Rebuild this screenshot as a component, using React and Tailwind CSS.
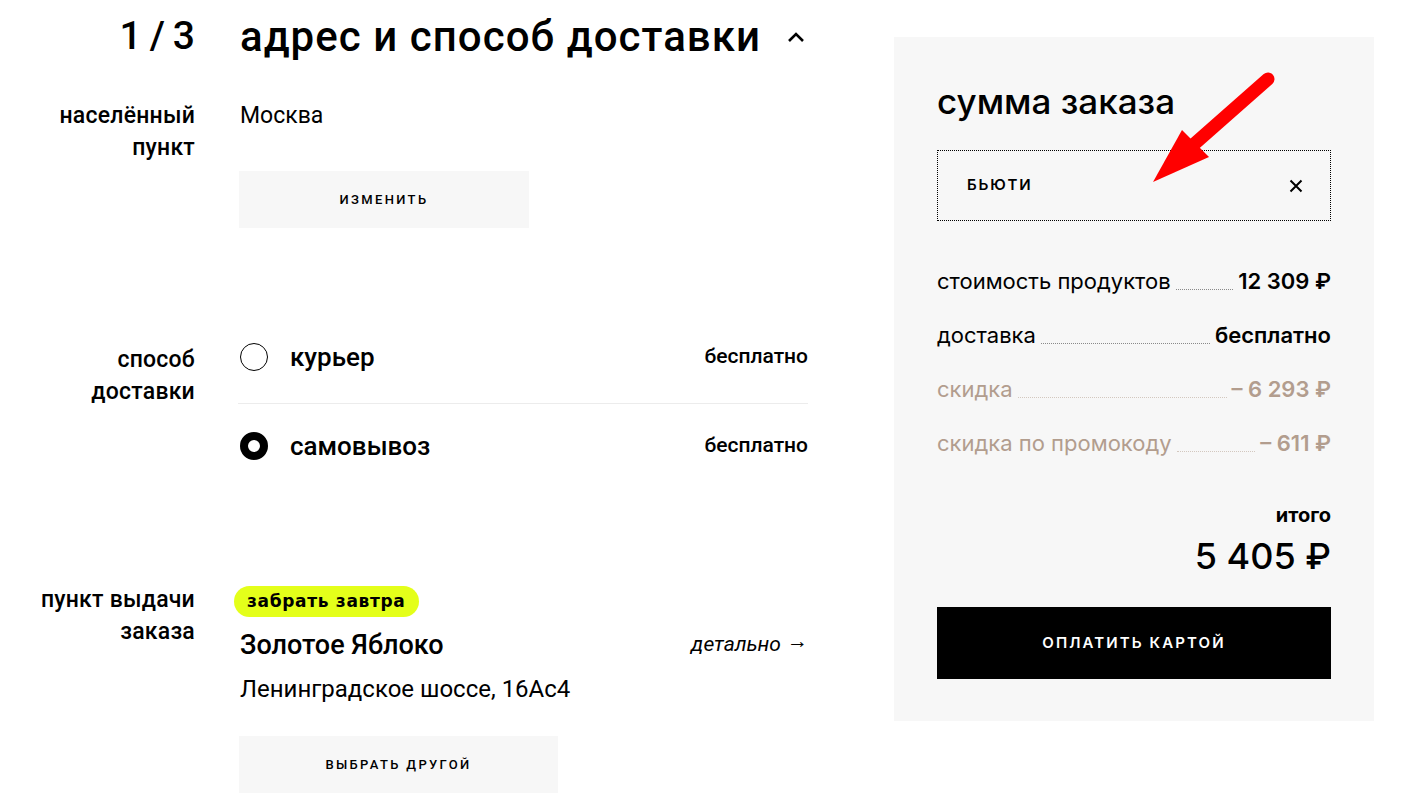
import React from 'react';

const leftFont = { fontFamily: 'Roboto, "Liberation Sans", sans-serif' };

function Radio({ checked }) {
  return checked ? (
    <span className="w-[28px] h-[28px] rounded-full border-[8px] border-black bg-white shrink-0" />
  ) : (
    <span className="w-[28px] h-[28px] rounded-full border border-black bg-white shrink-0" />
  );
}

function GrayButton({ children, w }) {
  return (
    <button className={`${w} h-[57px] bg-[#f7f7f7] text-[13px] font-medium tracking-[0.18em] text-black`}>
      {children}
    </button>
  );
}

function SumRow({ label, value, muted }) {
  return (
    <div className={`flex items-center h-[54px] text-[22px] ${muted ? 'text-[#b29d8e]' : 'text-black'}`}>
      <span className="whitespace-nowrap">{label}</span>
      <span className={`flex-1 self-end mx-[5px] mb-[18px] border-b border-dotted ${muted ? 'border-[#d3c8bf]' : 'border-[#8a8a8a]'}`} />
      <span className="font-semibold whitespace-nowrap">{value}</span>
    </div>
  );
}

export default function App() {
  return (
    <div className="relative flex w-[1417px] h-[802px] overflow-hidden bg-white text-black">
      {/* left column */}
      <div className="w-[808px] shrink-0" style={leftFont}>
        <div className="flex items-center h-[72px]">
          <div className="w-[195px] text-right text-[39px] font-medium">1&thinsp;/&thinsp;3</div>
          <h1 className="ml-[45px] text-[42px] font-medium tracking-[0.025em] whitespace-nowrap">адрес и способ доставки</h1>
          <svg className="ml-[25px] mt-[2px]" width="20" height="12" viewBox="0 0 20 12" fill="none">
            <path d="M3 10 L10 3 L17 10" stroke="black" strokeWidth="2.6" />
          </svg>
        </div>

        <div className="flex mt-[28px]">
          <div className="w-[195px] text-right text-[23px] font-medium leading-[32px] tracking-[0.01em]">
            населённый<br />пункт
          </div>
          <div className="ml-[45px] flex-1">
            <div className="text-[23px] leading-[32px]">Москва</div>
            <div className="mt-[39px] -ml-[1px]">
              <GrayButton w="w-[290px]">ИЗМЕНИТЬ</GrayButton>
            </div>
          </div>
        </div>

        <div className="flex mt-[116px]">
          <div className="w-[195px] text-right text-[23px] font-medium leading-[32px] tracking-[0.01em]">
            способ<br />доставки
          </div>
          <div className="ml-[45px] flex-1">
            <div className="flex items-center h-[48px] -mt-[11px]">
              <Radio />
              <span className="ml-[22px] text-[26px] font-medium">курьер</span>
              <span className="ml-auto text-[21px] font-medium">бесплатно</span>
            </div>
            <div className="mt-[22px] -ml-[2px] border-t border-[#ececec]" />
            <div className="flex items-center h-[84px]">
              <Radio checked />
              <span className="ml-[22px] text-[26px] font-medium">самовывоз</span>
              <span className="ml-auto text-[21px] font-medium">бесплатно</span>
            </div>
          </div>
        </div>

        <div className="flex mt-[96px]">
          <div className="w-[195px] text-right text-[23px] font-medium leading-[32px] tracking-[0.01em]">
            пункт выдачи<br />заказа
          </div>
          <div className="ml-[45px] flex-1">
            <span
              className="inline-flex items-center h-[31px] px-[13px] mt-[2px] -ml-[6px] rounded-full bg-[#e4ff1a] text-[17px] font-bold tracking-[0.04em]"
              style={{ fontFamily: '"DejaVu Sans", Inter, sans-serif' }}
            >
              забрать завтра
            </span>
            <div className="flex items-center h-[32px] mt-[12px]">
              <span className="text-[27px] font-medium">Золотое Яблоко</span>
              <span className="ml-auto text-[21px] italic">детально</span>
              <span className="ml-[6px] text-[21px] -mt-[6px]">→</span>
            </div>
            <div className="mt-[14px] h-[28px] text-[24px] leading-[28px]">Ленинградское шоссе, 16Ас4</div>
            <div className="mt-[33px] -ml-[1px]">
              <GrayButton w="w-[319px]">ВЫБРАТЬ ДРУГОЙ</GrayButton>
            </div>
          </div>
        </div>
      </div>

      {/* order summary */}
      <div
        className="ml-[86px] mt-[37px] w-[480px] h-[684px] shrink-0 bg-[#f7f7f7] px-[43px] pt-[44px]"
        style={{ fontFamily: 'Inter, "Liberation Sans", sans-serif' }}
      >
        <h2 className="text-[35px] font-medium leading-[40px]">сумма заказа</h2>
        <div className="mt-[29px] h-[71px] border border-dotted border-black flex items-center px-[29px]">
          <span className="text-[15px] font-semibold tracking-[0.12em]">БЬЮТИ</span>
          <svg className="ml-auto -mr-[2px]" width="14" height="14" viewBox="0 0 14 14">
            <path d="M1.5 1.5 L12.5 12.5 M12.5 1.5 L1.5 12.5" stroke="black" strokeWidth="2" />
          </svg>
        </div>
        <div className="mt-[33px]">
          <SumRow label="стоимость продуктов" value="12 309 ₽" />
          <SumRow label="доставка" value="бесплатно" />
          <SumRow label="скидка" value="– 6 293 ₽" muted />
          <SumRow label="скидка по промокоду" value="– 611 ₽" muted />
        </div>
        <div className="mt-[33px] text-right text-[20px] font-bold leading-[24px]">итого</div>
        <div className="mt-[8px] text-right text-[36px] font-medium leading-[42px]">5 405 ₽</div>
        <button className="mt-[30px] w-full h-[72px] bg-black text-white text-[15px] font-semibold tracking-[0.14em]">
          ОПЛАТИТЬ КАРТОЙ
        </button>
      </div>

      {/* red annotation arrow */}
      <svg className="absolute left-0 top-0 pointer-events-none" width="1417" height="802">
        <line x1="1268" y1="79" x2="1192" y2="146" stroke="#ff0000" strokeWidth="13" strokeLinecap="round" />
        <polygon points="1182,130 1153,182 1209,157" fill="#ff0000" />
      </svg>
    </div>
  );
}
